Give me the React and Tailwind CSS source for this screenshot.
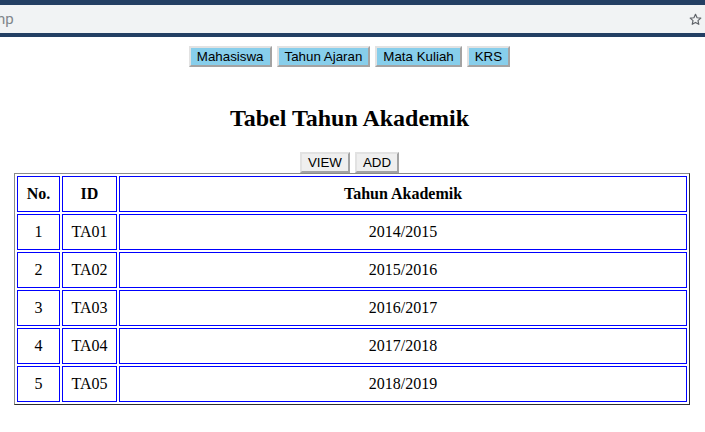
import React from "react";

const rows = [
  ["1", "TA01", "2014/2015"],
  ["2", "TA02", "2015/2016"],
  ["3", "TA03", "2016/2017"],
  ["4", "TA04", "2017/2018"],
  ["5", "TA05", "2018/2019"],
];

function NavBtn({ children }) {
  return (
    <button className="h-[21px] px-[6px] bg-[#87ceeb] border-2 border-solid border-t-[#e2e2e2] border-l-[#e2e2e2] border-b-[#a3a3a3] border-r-[#a3a3a3] text-[13.33px] leading-[15px] text-black font-['Liberation_Sans',Arial,sans-serif]">
      {children}
    </button>
  );
}

function GrayBtn({ children }) {
  return (
    <button className="h-[21px] px-[6px] bg-[#efefef] border-2 border-solid border-t-[#e2e2e2] border-l-[#e2e2e2] border-b-[#a3a3a3] border-r-[#a3a3a3] text-[13.33px] leading-[15px] text-black font-['Liberation_Sans',Arial,sans-serif]">
      {children}
    </button>
  );
}

function Star() {
  return (
    <svg width="13" height="13" viewBox="0 0 24 24" fill="none" stroke="#5f6368" strokeWidth="2.2" strokeLinejoin="round">
      <path d="M12 2.5l2.9 6.3 6.9.7-5.2 4.6 1.5 6.8L12 17.4l-6.1 3.5 1.5-6.8-5.2-4.6 6.9-.7z" />
    </svg>
  );
}

export default function App() {
  return (
    <div className="w-[705px] min-h-[432px] bg-white font-['Liberation_Serif','Times_New_Roman',serif] text-black">
      <div className="h-[37px] bg-[#233f63] pt-[5px] pb-[4px]">
        <div className="h-[28px] bg-[#f1f3f4] flex items-center justify-between">
          <span className="ml-[-3px] text-[15px] text-[#80868b] font-['Roboto','Noto_Sans',sans-serif]">hp</span>
          <span className="mr-[3px] flex items-center">
            <Star />
          </span>
        </div>
      </div>

      <div className="pr-[6px]">
        <div className="mt-[9px] flex justify-center gap-[5px]">
          <NavBtn>Mahasiswa</NavBtn>
          <NavBtn>Tahun Ajaran</NavBtn>
          <NavBtn>Mata Kuliah</NavBtn>
          <NavBtn>KRS</NavBtn>
        </div>

        <h2 className="mt-[37px] text-center text-[24px] leading-[28px] font-bold">Tabel Tahun Akademik</h2>

        <div className="mt-[20px] flex justify-center gap-[5px]">
          <GrayBtn>VIEW</GrayBtn>
          <GrayBtn>ADD</GrayBtn>
        </div>
      </div>

      <table className="ml-[14px] w-[676px] border-separate border-spacing-[2px] border border-solid border-t-[#8a8a8a] border-l-[#8a8a8a] border-b-[#2e2e2e] border-r-[#2e2e2e] text-[16px] leading-[18px]">
        <thead>
          <tr>
            <th className="w-[43px] p-[8px] border border-[#0000ff] font-bold text-center">No.</th>
            <th className="w-[55px] p-[8px] border border-[#0000ff] font-bold text-center">ID</th>
            <th className="p-[8px] border border-[#0000ff] font-bold text-center">Tahun Akademik</th>
          </tr>
        </thead>
        <tbody>
          {rows.map((r) => (
            <tr key={r[0]}>
              <td className="p-[8px] border border-[#0000ff] text-center">{r[0]}</td>
              <td className="p-[8px] border border-[#0000ff] text-center">{r[1]}</td>
              <td className="p-[8px] border border-[#0000ff] text-center">{r[2]}</td>
            </tr>
          ))}
        </tbody>
      </table>
    </div>
  );
}
